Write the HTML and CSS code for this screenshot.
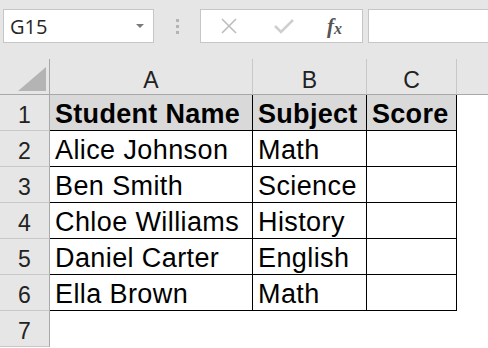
FILE: index.html
```html
<!DOCTYPE html>
<html lang="en">
<head>
    <meta charset="UTF-8">
    <title>Sheet</title>
    <link rel="stylesheet" href="styles.css">
</head>
<body>
    <div class="formula-bar">
        <div class="name-box">
            <span>G15</span>
            <span class="arrow"></span>
        </div>
        <div class="grip"><i></i><i></i><i></i></div>
        <div class="fn-box">
            <svg class="icon" width="16" height="16" viewBox="0 0 16 16"><path d="M1 1 L15 15 M15 1 L1 15" stroke="#bdbdbd" stroke-width="1.6" fill="none"/></svg>
            <svg class="icon" width="20" height="16" viewBox="0 0 20 16"><path d="M1 8 L7 14 L19 2" stroke="#cfcfcf" stroke-width="2.6" fill="none"/></svg>
            <span class="fx">f<sub>x</sub></span>
        </div>
        <div class="input-box"></div>
    </div>

    <table class="sheet">
        <colgroup>
            <col class="c-head">
            <col class="c-a">
            <col class="c-b">
            <col class="c-c">
            <col>
        </colgroup>
        <tr class="col-heads">
            <th class="corner"><span class="tri"></span></th>
            <th>A</th>
            <th>B</th>
            <th>C</th>
            <th class="blank"></th>
        </tr>
        <tr class="title-row">
            <th>1</th>
            <td class="cell">Student Name</td>
            <td class="cell">Subject</td>
            <td class="cell">Score</td>
            <td></td>
        </tr>
        <tr>
            <th>2</th>
            <td class="cell">Alice Johnson</td>
            <td class="cell">Math</td>
            <td class="cell"></td>
            <td></td>
        </tr>
        <tr>
            <th>3</th>
            <td class="cell">Ben Smith</td>
            <td class="cell">Science</td>
            <td class="cell"></td>
            <td></td>
        </tr>
        <tr>
            <th>4</th>
            <td class="cell">Chloe Williams</td>
            <td class="cell">History</td>
            <td class="cell"></td>
            <td></td>
        </tr>
        <tr>
            <th>5</th>
            <td class="cell">Daniel Carter</td>
            <td class="cell">English</td>
            <td class="cell"></td>
            <td></td>
        </tr>
        <tr>
            <th>6</th>
            <td class="cell">Ella Brown</td>
            <td class="cell">Math</td>
            <td class="cell"></td>
            <td></td>
        </tr>
        <tr>
            <th>7</th>
            <td></td>
            <td></td>
            <td></td>
            <td></td>
        </tr>
    </table>
</body>
</html>
```

FILE: styles.css
```css
body {
    margin: 0;
    width: 488px;
    height: 348px;
    overflow: hidden;
    background: #ffffff;
    font-family: "Liberation Sans", Arial, sans-serif;
}

/* top formula bar */
.formula-bar {
    display: flex;
    align-items: center;
    height: 59px;
    padding: 0 0 7px 3px;
    box-sizing: border-box;
    background: #e6e6e6;
    font-family: "Open Sans", "Noto Sans", sans-serif;
}

.name-box, .fn-box, .input-box {
    height: 34px;
    box-sizing: border-box;
    background: #ffffff;
    border: 1px solid #c6c6c6;
}

.name-box {
    width: 151px;
    display: flex;
    align-items: center;
    justify-content: space-between;
    padding: 0 9px 0 6px;
    font-size: 20px;
    color: #262626;
}

.arrow {
    width: 0;
    height: 0;
    border-left: 4px solid transparent;
    border-right: 4px solid transparent;
    border-top: 4px solid #7a7a7a;
}

.grip {
    width: 46px;
    display: flex;
    flex-direction: column;
    align-items: center;
    gap: 3px;
}

.grip i {
    width: 3px;
    height: 3px;
    background: #b4b4b4;
}

.fn-box {
    width: 163px;
    display: flex;
    align-items: center;
    padding-left: 20px;
}

.fn-box .icon:first-child {
    margin-right: 37px;
}

.fx {
    margin-left: 33px;
    font-family: "Liberation Serif", serif;
    font-style: italic;
    font-weight: bold;
    font-size: 21px;
    color: #555555;
}

.fx sub {
    font-size: 16px;
    vertical-align: -1px;
}

.input-box {
    flex: 1;
    margin-left: 5px;
    border-right: none;
}

/* grid */
.sheet {
    border-collapse: separate;
    border-spacing: 0;
    table-layout: fixed;
    width: 488px;
    margin-top: 0;
}

.c-head { width: 50px; }
.c-a { width: 203px; }
.c-b { width: 114px; }
.c-c { width: 90px; }

.sheet tr {
    height: 36px;
}

.sheet th {
    padding: 0;
    background: #e6e6e6;
    font-weight: normal;
    font-size: 23px;
    line-height: 28px;
    color: #222222;
    box-sizing: border-box;
}

.col-heads th {
    border-right: 1px solid #c8c8c8;
    border-bottom: 1px solid #a8a8a8;
    padding-top: 6px;
}

.col-heads th.corner {
    border-right: 1px solid #a8a8a8;
    position: relative;
}

.col-heads th.blank {
    border-right: none;
}

.tri {
    position: absolute;
    right: 3px;
    bottom: 3px;
    width: 0;
    height: 0;
    border-left: 28px solid transparent;
    border-bottom: 24px solid #b4b4b4;
}

tr:not(.col-heads) th {
    border-right: 1px solid #a8a8a8;
    border-bottom: 1px solid #c8c8c8;
    padding-top: 4px;
}

.sheet td {
    padding: 4px 0 0 5px;
    font-size: 27px;
    line-height: 31px;
    letter-spacing: 0.4px;
    color: #000000;
    white-space: nowrap;
    overflow: hidden;
    box-sizing: border-box;
}

.sheet td.cell {
    border-right: 1px solid #000000;
    border-bottom: 1px solid #000000;
}

.title-row td.cell {
    background: #d9d9d9;
    font-weight: bold;
    letter-spacing: 0.3px;
}
```
